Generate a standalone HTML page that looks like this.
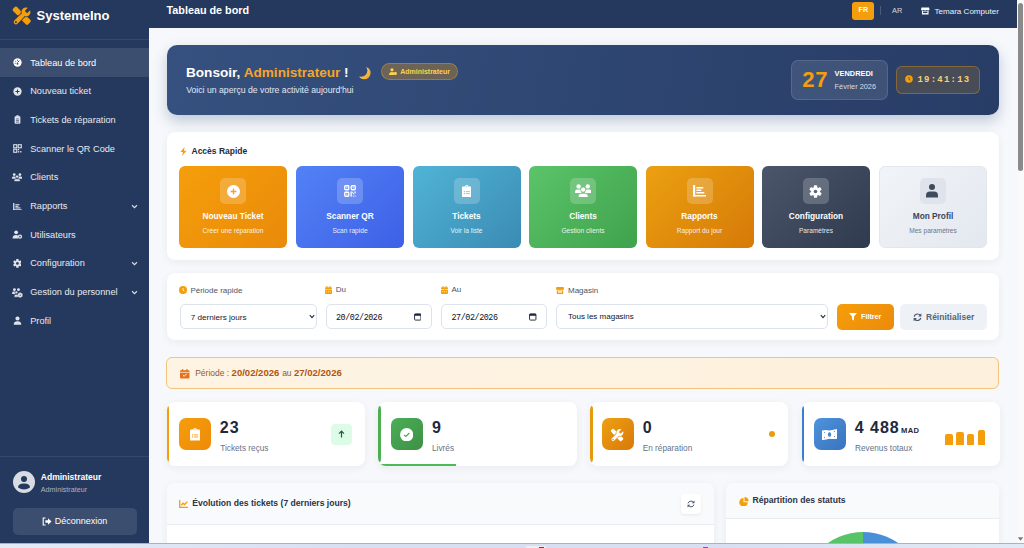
<!DOCTYPE html>
<html><head><meta charset="utf-8">
<style>
*{box-sizing:border-box;margin:0;padding:0}
html,body{width:1024px;height:548px;overflow:hidden;background:#f6f8fb;font-family:"Liberation Sans",sans-serif}
.abs{position:absolute}
.t{position:absolute;white-space:nowrap;line-height:1}
#side{position:absolute;left:0;top:0;width:149px;height:543px;background:#25395e}
#top{position:absolute;left:149px;top:0;width:868px;height:28px;background:#25395e}
#main{position:absolute;left:149px;top:28px;width:868px;height:515px;background:#f6f8fb}
.card{position:absolute;background:#fff;border-radius:8px;box-shadow:0 2px 8px rgba(30,41,59,0.06)}
.nav{position:absolute;left:0;width:149px;height:29px}
.nav .ic{position:absolute;left:13px;top:10px;width:9px;height:9px}
.nav .lb{position:absolute;left:30.2px;top:10.5px;font-size:9.2px;color:#e6e9f0;line-height:1;white-space:nowrap}
.chev{position:absolute;left:131px;top:11px;width:7px;height:7px}
.tile{position:absolute;top:166px;width:108px;height:81.5px;border-radius:6px}
.tile .ib{position:absolute;left:41px;top:11.5px;width:26px;height:26px;border-radius:5px;background:rgba(255,255,255,0.2)}
.tile .tt{position:absolute;left:0;width:108px;text-align:center;top:46px;font-size:8.3px;font-weight:700;color:#fff;line-height:1}
.tile .ts{position:absolute;left:0;width:108px;text-align:center;top:62px;font-size:6.6px;color:rgba(255,255,255,0.9);line-height:1}
.lbl{position:absolute;top:286.6px;font-size:8px;color:#4a5568;line-height:1;white-space:nowrap}
.inp{position:absolute;top:304.2px;height:25.2px;border:1px solid #dde3ec;border-radius:5px;background:#fff}
.stat{position:absolute;top:402px;width:198px;height:64px;background:#fff;border-radius:8px;box-shadow:0 2px 8px rgba(30,41,59,0.06);overflow:hidden}
.stat .bar{position:absolute;left:0;top:4px;width:2.6px;height:56px;border-radius:2.6px/7px}
.stat .sib{position:absolute;left:12.4px;top:16px;width:32px;height:32px;border-radius:7px}
.stat .num{position:absolute;left:53.3px;top:18px;font-size:16px;letter-spacing:1px;font-weight:700;color:#1e293b;line-height:1;white-space:nowrap}
.stat .sl{position:absolute;left:53.7px;top:43.1px;font-size:8.25px;color:#64748b;line-height:1;white-space:nowrap}
</style></head><body>

<!-- SIDEBAR -->
<div id="side">
  <svg class="abs" style="left:10px;top:4px" width="24" height="24" viewBox="0 0 24 24">
    <g transform="rotate(45 12 12)" fill="#f59e0b">
      <rect x="0.6" y="9.2" width="8.6" height="5.6" rx="1.6"/>
      <rect x="8" y="11" width="5" height="2"/>
      <rect x="11.6" y="8.9" width="10.6" height="6.2" rx="1.4"/>
    </g>
    <g transform="rotate(-45 12 12)">
      <g fill="#25395e" stroke="#25395e" stroke-width="1.6"><rect x="1.2" y="9.8" width="13" height="4.4" rx="2.2"/><circle cx="17.6" cy="12" r="4.5"/></g>
      <g fill="#f59e0b"><rect x="1.2" y="9.8" width="13" height="4.4" rx="2.2"/><circle cx="17.6" cy="12" r="4.5"/></g>
      <path d="M17.9 10.3 H23 V13.7 H17.9 Q16.8 12 17.9 10.3Z" fill="#25395e"/>
      <circle cx="3.4" cy="12" r="1" fill="#25395e"/>
    </g>
  </svg>
  <div class="t" style="left:36.5px;top:9px;font-size:13px;font-weight:700;color:#fff">SystemeIno</div>
  <div class="abs" style="left:0;top:39px;width:149px;height:1px;background:#34486c"></div>

  <div class="nav" style="top:48.0px;background:#3c4e6f">
    <svg class="ic" viewBox="0 0 10 10"><circle cx="5" cy="5" r="4.6" fill="#fff"/><path d="M5 5 L7 3" stroke="#3c4e6f" stroke-width="1.1"/><circle cx="3" cy="3.6" r="0.6" fill="#3c4e6f"/><circle cx="5" cy="2.4" r="0.6" fill="#3c4e6f"/><circle cx="2.4" cy="5.8" r="0.6" fill="#3c4e6f"/><circle cx="5" cy="6.4" r="1" fill="#3c4e6f"/></svg>
    <div class="lb" style="color:#fff">Tableau de bord</div>
  </div>
  <div class="nav" style="top:76.7px">
    <svg class="ic" viewBox="0 0 10 10"><circle cx="5" cy="5" r="4.6" fill="#dfe3ea"/><path d="M5 2.8V7.2M2.8 5H7.2" stroke="#25395e" stroke-width="1.1"/></svg>
    <div class="lb">Nouveau ticket</div>
  </div>
  <div class="nav" style="top:105.4px">
    <svg class="ic" viewBox="0 0 10 10"><rect x="1.8" y="1.4" width="6.4" height="8.2" rx="0.8" fill="#dfe3ea"/><rect x="3.6" y="0.4" width="2.8" height="1.8" rx="0.5" fill="#dfe3ea"/><path d="M3.3 4.4H6.7M3.3 6.2H6.7M3.3 8H6.7" stroke="#25395e" stroke-width="0.7"/></svg>
    <div class="lb">Tickets de réparation</div>
  </div>
  <div class="nav" style="top:134.1px">
    <svg class="ic" viewBox="0 0 10 10"><g fill="none" stroke="#dfe3ea" stroke-width="1.2"><rect x="0.8" y="0.8" width="3.4" height="3.4"/><rect x="5.8" y="0.8" width="3.4" height="3.4"/><rect x="0.8" y="5.8" width="3.4" height="3.4"/></g><rect x="5.4" y="5.4" width="1.5" height="1.5" fill="#dfe3ea"/><rect x="7.9" y="7.9" width="1.5" height="1.5" fill="#dfe3ea"/><rect x="5.4" y="7.9" width="1.5" height="1.5" fill="#dfe3ea"/></svg>
    <div class="lb">Scanner le QR Code</div>
  </div>
  <div class="nav" style="top:162.8px">
    <svg class="abs" style="left:11.7px;top:10.2px" width="10.2" height="8.6" viewBox="0 0 16.4 13.6"><g fill="#dfe3ea"><circle cx="3.6" cy="2.4" r="2.2"/><circle cx="12.8" cy="2.4" r="2.2"/><path d="M0 9V7.6Q0 5.6 2.4 5.6H4.8Q6.6 5.6 6.6 7.4V9Z"/><path d="M16.4 9V7.6Q16.4 5.6 14 5.6H11.6Q9.8 5.6 9.8 7.4V9Z"/></g><g fill="#dfe3ea" stroke="#25395e" stroke-width="1.1"><circle cx="8.2" cy="5.6" r="2.6"/><path d="M3.2 13.6V12.2Q3.2 9.3 6 9.3H10.4Q13.2 9.3 13.2 12.2V13.6Z"/></g></svg>
    <div class="lb">Clients</div>
  </div>
  <div class="nav" style="top:191.5px">
    <svg class="abs" style="left:13px;top:11px" width="8.8" height="7.4" viewBox="0 0 13.4 11.6"><g fill="#dfe3ea"><rect x="0" y="0" width="2" height="11.6"/><rect x="0" y="9.8" width="13.4" height="1.8"/><rect x="3.5" y="1.9" width="6.5" height="1.7"/><rect x="3.5" y="4.4" width="4.8" height="1.7"/><rect x="3.5" y="6.9" width="8" height="1.7"/></g></svg>
    <div class="lb">Rapports</div>
    <svg class="chev" viewBox="0 0 8 8"><path d="M1.2 2.6L4 5.4L6.8 2.6" fill="none" stroke="#d5dae3" stroke-width="1.45"/></svg>
  </div>
  <div class="nav" style="top:220.2px">
    <svg class="ic" style="width:11px;left:12px" viewBox="0 0 11 10"><g fill="#dfe3ea"><circle cx="4" cy="2.6" r="2.1"/><path d="M0 9.4 Q0 5.6 4 5.6 Q5.5 5.6 6 6 L6 9.4Z"/><circle cx="8.2" cy="7.4" r="2.4"/></g><circle cx="8.2" cy="7.4" r="0.9" fill="#25395e"/></svg>
    <div class="lb">Utilisateurs</div>
  </div>
  <div class="nav" style="top:248.9px">
    <svg class="abs" style="left:12.6px;top:10.2px" width="8.8" height="8.8" viewBox="0 0 13 13"><g fill="#dfe3ea"><circle cx="6.5" cy="6.5" r="4.4"/><g transform="translate(6.5 6.5)"><rect x="-1.8" y="-6.4" width="3.6" height="12.8" rx="0.8"/><rect x="-1.8" y="-6.4" width="3.6" height="12.8" rx="0.8" transform="rotate(60)"/><rect x="-1.8" y="-6.4" width="3.6" height="12.8" rx="0.8" transform="rotate(120)"/></g></g><circle cx="6.5" cy="6.5" r="1.9" fill="#25395e"/></svg>
    <div class="lb">Configuration</div>
    <svg class="chev" viewBox="0 0 8 8"><path d="M1.2 2.6L4 5.4L6.8 2.6" fill="none" stroke="#d5dae3" stroke-width="1.45"/></svg>
  </div>
  <div class="nav" style="top:277.6px">
    <svg class="abs" style="left:11.8px;top:10.4px" width="10.8" height="9.6" viewBox="0 0 11 10"><g fill="#dfe3ea"><circle cx="2.4" cy="1.7" r="1.5"/><circle cx="6.6" cy="1.7" r="1.5"/><path d="M0 6.2V5.2Q0 3.7 1.6 3.7H3.4Q4.6 3.7 4.6 5V6.2Z"/><circle cx="4.5" cy="4.6" r="1.5" stroke="#25395e" stroke-width="0.7"/><path d="M2 9.6V8.4Q2 6.6 3.8 6.6H5.6Q6.8 6.6 6.8 8V9.6Z" stroke="#25395e" stroke-width="0.7"/></g><g fill="#dfe3ea" transform="translate(8.4 7.4)" stroke="#25395e" stroke-width="0.5"><circle r="2.4"/></g><g fill="#dfe3ea" transform="translate(8.4 7.4)"><rect x="-0.7" y="-2.6" width="1.4" height="5.2"/><rect x="-0.7" y="-2.6" width="1.4" height="5.2" transform="rotate(60)"/><rect x="-0.7" y="-2.6" width="1.4" height="5.2" transform="rotate(120)"/><circle r="1.8"/></g><circle cx="8.4" cy="7.4" r="0.7" fill="#25395e"/></svg>
    <div class="lb">Gestion du personnel</div>
    <svg class="chev" viewBox="0 0 8 8"><path d="M1.2 2.6L4 5.4L6.8 2.6" fill="none" stroke="#d5dae3" stroke-width="1.45"/></svg>
  </div>
  <div class="nav" style="top:306.3px">
    <svg class="ic" viewBox="0 0 10 10"><g fill="#dfe3ea"><circle cx="5" cy="2.8" r="2.3"/><path d="M0.8 9.6 Q0.8 5.8 5 5.8 Q9.2 5.8 9.2 9.6Z"/></g></svg>
    <div class="lb">Profil</div>
  </div>

  <div class="abs" style="left:0;top:456px;width:149px;height:1px;background:#34486c"></div>
  <svg class="abs" style="left:12.5px;top:471px" width="22" height="22" viewBox="0 0 22 22"><circle cx="11" cy="11" r="11" fill="#d8dbe2"/><circle cx="11" cy="8" r="3" fill="#25395e"/><path d="M5 16.5 Q5 12.5 11 12.5 Q17 12.5 17 16.5 Q14 18.5 11 18.5 Q8 18.5 5 16.5Z" fill="#25395e"/></svg>
  <div class="t" style="left:40.8px;top:473px;font-size:8.5px;font-weight:700;color:#fff">Administrateur</div>
  <div class="t" style="left:40.8px;top:486px;font-size:7.2px;color:#a9b3c6">Administrateur</div>
  <div class="abs" style="left:13px;top:508px;width:123.5px;height:26.5px;border-radius:5px;background:#3c4e6f"></div>
  <svg class="abs" style="left:41.5px;top:516.5px" width="10" height="9" viewBox="0 0 10 9"><path d="M3.6 1H1.2V8H3.6" fill="none" stroke="#fff" stroke-width="1.1"/><path d="M3.4 3.3H6V1.3L9.5 4.5L6 7.7V5.7H3.4Z" fill="#fff"/></svg>
  <div class="t" style="left:54.8px;top:517px;font-size:9px;color:#fff">Déconnexion</div>
</div>

<!-- TOP BAR -->
<div id="top">
  <div class="t" style="left:17.5px;top:5.4px;font-size:10.8px;font-weight:700;color:#fff">Tableau de bord</div>
  <div class="abs" style="left:703px;top:2px;width:22px;height:17.5px;border-radius:3px;background:#f59e0b"></div>
  <div class="t" style="left:709.6px;top:7.3px;font-size:7.1px;font-weight:700;color:#fff">FR</div>
  <div class="abs" style="left:730.5px;top:5.5px;width:1px;height:9px;background:#4a5b7a"></div>
  <div class="t" style="left:743px;top:7.3px;font-size:7.4px;color:#d4d9e3">AR</div>
  <svg class="abs" style="left:772px;top:6.5px" width="8.5" height="8" viewBox="0 0 9 8"><path d="M0.5 0.3H8.5L9 2.6Q8.6 3.4 7.6 3.4Q6.6 3.4 6.3 2.7Q5.8 3.4 4.5 3.4Q3.2 3.4 2.7 2.7Q2.4 3.4 1.4 3.4Q0.4 3.4 0 2.6Z" fill="#fff"/><path d="M1 3.9H8V7.7H1Z" fill="#fff"/><rect x="2.2" y="4.6" width="4.6" height="1.6" fill="#25395e"/></svg>
  <div class="t" style="left:785.5px;top:7.6px;font-size:8.05px;color:#eef1f6">Temara Computer</div>
</div>

<!-- scrollbar -->
<div class="abs" style="left:1017px;top:0;width:7px;height:543px;background:#fafafa"></div>
<div class="abs" style="left:1018px;top:3px;width:4.5px;height:168px;border-radius:3px;background:#8a8a8a"></div>
<svg class="abs" style="left:1017px;top:535.5px" width="7" height="6" viewBox="0 0 7 6"><path d="M0.8 1.2H6.2L3.5 4.8Z" fill="#7a7a7a"/></svg>

<!-- HERO -->
<div class="abs" style="left:166.5px;top:45px;width:832.5px;height:70px;border-radius:10px;background:linear-gradient(100deg,#36517f 0%,#2e4672 50%,#283d66 100%);box-shadow:0 6px 14px rgba(30,58,110,0.25)"></div>
<div class="t" style="left:186px;top:65.5px;font-size:13.6px;font-weight:700;color:#fff">Bonsoir, <span style="color:#f6a623">Administrateur</span> !</div>
<svg class="abs" style="left:356.5px;top:66px" width="14" height="14" viewBox="0 0 14 14"><defs><mask id="mm"><rect width="14" height="14" fill="#fff"/><circle cx="4.2" cy="4.6" r="6.2" fill="#000"/></mask><linearGradient id="mg" x1="0" y1="0" x2="1" y2="1"><stop offset="0" stop-color="#ffd36b"/><stop offset="1" stop-color="#f0a52a"/></linearGradient></defs><circle cx="7.3" cy="7" r="6.3" fill="url(#mg)" mask="url(#mm)"/></svg>
<div class="abs" style="left:381px;top:63px;width:77px;height:17px;border-radius:9px;background:rgba(245,158,11,0.3);border:1px solid rgba(245,158,11,0.4)"></div>
<svg class="abs" style="left:389px;top:68px" width="8" height="7" viewBox="0 0 8 7"><circle cx="3" cy="1.8" r="1.6" fill="#fcd34d"/><path d="M0 7Q0 4 3 4Q4.5 4 5 4.5V7Z" fill="#fcd34d"/><circle cx="6.3" cy="5.4" r="1.6" fill="#fcd34d"/></svg>
<div class="t" style="left:400.2px;top:68px;font-size:7px;font-weight:700;color:#fcd34d">Administrateur</div>
<div class="t" style="left:186.2px;top:86px;font-size:8.7px;color:#e3e8f2">Voici un aperçu de votre activité aujourd'hui</div>

<div class="abs" style="left:791px;top:60px;width:97px;height:40px;border-radius:7px;background:rgba(255,255,255,0.1);border:1px solid rgba(255,255,255,0.12)"></div>
<div class="t" style="left:802.3px;top:69px;font-size:22px;font-weight:700;color:#f59e0b;letter-spacing:0.6px">27</div>
<div class="t" style="left:834.6px;top:70px;font-size:7.4px;font-weight:700;color:#fff">VENDREDI</div>
<div class="t" style="left:834.6px;top:82.6px;font-size:7.4px;color:#d7dce6">Février 2026</div>
<div class="abs" style="left:896px;top:66px;width:84px;height:28px;border-radius:6px;background:#484c56;border:1px solid rgba(245,158,11,0.35)"></div>
<svg class="abs" style="left:905px;top:75px" width="8" height="8" viewBox="0 0 8 8"><circle cx="4" cy="4" r="3.8" fill="#f59e0b"/><path d="M4 2V4.3L5.4 5.2" fill="none" stroke="#4a4540" stroke-width="0.8"/></svg>
<div class="t" style="left:917.5px;top:75.5px;font-size:9px;font-weight:700;color:#f3d27a;font-family:'Liberation Mono';letter-spacing:1.22px">19:41:13</div>

<!-- QUICK ACCESS -->
<div class="card" style="left:167px;top:132px;width:832px;height:128px"></div>
<svg class="abs" style="left:179.5px;top:146.5px" width="7" height="9" viewBox="0 0 7 9"><path d="M4.5 0L0.5 5H3L2 9L6.5 3.8H4Z" fill="#f59e0b"/></svg>
<div class="t" style="left:191.5px;top:147px;font-size:8.5px;font-weight:700;color:#1e293b">Accès Rapide</div>

<div class="tile" style="left:179px;background:linear-gradient(135deg,#f59e0b,#ea8a0a)">
  <div class="ib"></div>
  <svg class="abs" style="left:47.5px;top:18.8px" width="13" height="13" viewBox="0 0 13 13"><circle cx="6.5" cy="6.5" r="6.5" fill="#fff"/><path d="M6.5 3.6V9.4M3.6 6.5H9.4" stroke="#f3a12c" stroke-width="1.3"/></svg>
  <div class="tt">Nouveau Ticket</div><div class="ts">Créer une réparation</div>
</div>
<div class="tile" style="left:296px;background:linear-gradient(135deg,#5282f6,#3e60e6)">
  <div class="ib"></div>
  <svg class="abs" style="left:48px;top:18.5px" width="12" height="12" viewBox="0 0 12 12"><g fill="none" stroke="#fff" stroke-width="1.3"><rect x="0.75" y="0.75" width="4" height="4" rx="0.7"/><rect x="7.25" y="0.75" width="4" height="4" rx="0.7"/><rect x="0.75" y="7.25" width="4" height="4" rx="0.7"/></g><g fill="#fff"><rect x="2.2" y="2.2" width="1.1" height="1.1"/><rect x="8.7" y="2.2" width="1.1" height="1.1"/><rect x="2.2" y="8.7" width="1.1" height="1.1"/><rect x="6.5" y="6.5" width="1.3" height="5.2"/><rect x="10.4" y="6.5" width="1.3" height="1.8"/><path d="M7.6 6.8L8.6 6.8L10.6 9.4L9.6 9.4Z"/><rect x="8.7" y="10.6" width="1" height="1"/><rect x="10.6" y="10.6" width="1" height="1"/></g></svg>
  <div class="tt">Scanner QR</div><div class="ts">Scan rapide</div>
</div>
<div class="tile" style="left:412.5px;background:linear-gradient(135deg,#50b4d6,#3b8bb3)">
  <div class="ib"></div>
  <svg class="abs" style="left:49.2px;top:18.8px" width="9.6" height="12.2" viewBox="0 0 9.6 12.2"><g fill="#fff"><rect x="0" y="1.4" width="9.6" height="10.8" rx="0.9"/><circle cx="4.8" cy="1.7" r="1.7"/></g><g fill="#84c4dc"><circle cx="4.8" cy="1.8" r="0.6"/><rect x="1.8" y="6.1" width="1.2" height="1.1"/><rect x="1.8" y="8.1" width="1.2" height="1.1"/><rect x="3.9" y="6.2" width="3.9" height="0.9"/><rect x="3.9" y="8.2" width="3.9" height="0.9"/></g></svg>
  <div class="tt">Tickets</div><div class="ts">Voir la liste</div>
</div>
<div class="tile" style="left:529px;background:linear-gradient(135deg,#5bc46a,#3fa24c)">
  <div class="ib"></div>
  <svg class="abs" style="left:45.8px;top:17.8px" width="16.4" height="13.6" viewBox="0 0 16.4 13.6"><g fill="#fff"><circle cx="3.6" cy="2.4" r="2.2"/><circle cx="12.8" cy="2.4" r="2.2"/><path d="M0 9V7.6Q0 5.6 2.4 5.6H4.8Q6.6 5.6 6.6 7.4V9Z"/><path d="M16.4 9V7.6Q16.4 5.6 14 5.6H11.6Q9.8 5.6 9.8 7.4V9Z"/></g><g fill="#fff" stroke="#78c580" stroke-width="0.9"><circle cx="8.2" cy="5.6" r="2.6"/><path d="M3.2 13.6V12.2Q3.2 9.3 6 9.3H10.4Q13.2 9.3 13.2 12.2V13.6Z"/></g></svg>
  <div class="tt">Clients</div><div class="ts">Gestion clients</div>
</div>
<div class="tile" style="left:645.5px;background:linear-gradient(135deg,#eba010,#d67a08)">
  <div class="ib"></div>
  <svg class="abs" style="left:47.4px;top:19px" width="13.4" height="11.6" viewBox="0 0 13.4 11.6"><g fill="#fff"><rect x="0" y="0" width="2.2" height="11.6" rx="0.6"/><rect x="0" y="9.9" width="13.4" height="1.7" rx="0.6"/><rect x="3.3" y="1.9" width="7" height="1.7" rx="0.4"/><rect x="3.3" y="4.4" width="5.2" height="1.5" rx="0.4"/><rect x="3.3" y="6.9" width="8" height="1.7" rx="0.4"/></g></svg>
  <div class="tt">Rapports</div><div class="ts">Rapport du jour</div>
</div>
<div class="tile" style="left:762px;background:linear-gradient(135deg,#4b566b,#2f3a4e)">
  <div class="ib"></div>
  <svg class="abs" style="left:47.4px;top:18.8px" width="13" height="13" viewBox="0 0 13 13"><g fill="#fff"><circle cx="6.5" cy="6.5" r="4.4"/><g transform="translate(6.5 6.5)"><rect x="-1.7" y="-6.3" width="3.4" height="12.6" rx="0.8"/><rect x="-1.7" y="-6.3" width="3.4" height="12.6" rx="0.8" transform="rotate(60)"/><rect x="-1.7" y="-6.3" width="3.4" height="12.6" rx="0.8" transform="rotate(120)"/></g></g><circle cx="6.5" cy="6.5" r="1.8" fill="#5d6779"/></svg>
  <div class="tt">Configuration</div><div class="ts">Paramètres</div>
</div>
<div class="tile" style="left:879px;background:linear-gradient(135deg,#f1f4f8,#e3e8ef);border:1px solid #e2e7ee">
  <div class="ib" style="background:#dfe4ec;left:40px;top:10.5px"></div>
  <svg class="abs" style="left:46.4px;top:17.4px" width="12" height="13.4" viewBox="0 0 12 13.4"><g fill="#3f4a5c"><circle cx="6" cy="3" r="3"/><path d="M0 13.4V11.6Q0 7.6 4 7.6H8Q12 7.6 12 11.6V13.4Z"/></g></svg>
  <div class="tt" style="color:#3b4556;top:45px;left:-1px">Mon Profil</div><div class="ts" style="color:#6b7688;top:61px;left:-1px">Mes paramètres</div>
</div>

<!-- FILTERS -->
<div class="card" style="left:167px;top:273px;width:832px;height:67px"></div>
<svg class="abs" style="left:179px;top:286.3px" width="8" height="8" viewBox="0 0 8 8"><circle cx="4" cy="4" r="4" fill="#f59e0b"/><path d="M4 2V4.2L5.3 5" fill="none" stroke="#fff" stroke-width="0.8"/></svg>
<div class="lbl" style="left:190.4px">Période rapide</div>
<div class="inp" style="left:179.5px;width:137.5px"></div>
<div class="t" style="left:190.7px;top:313.6px;font-size:8.1px;color:#0f172a">7 derniers jours</div>
<svg class="abs" style="left:309px;top:314px" width="6" height="5" viewBox="0 0 6 5"><path d="M0.8 1.2L3 3.6L5.2 1.2" fill="none" stroke="#1e293b" stroke-width="1.1"/></svg>

<svg class="abs" style="left:325px;top:286px" width="7" height="8" viewBox="0 0 7 8"><g fill="#f59e0b"><rect x="1.5" y="0" width="1" height="1.8" rx="0.4"/><rect x="4.5" y="0" width="1" height="1.8" rx="0.4"/><rect x="0" y="1.2" width="7" height="1.7" rx="0.6"/><rect x="0" y="3.4" width="7" height="4.6" rx="0.8"/></g><g fill="#fde6bf"><rect x="1.3" y="5" width="0.8" height="1.2"/><rect x="3.1" y="5" width="0.8" height="1.2"/><rect x="4.9" y="5" width="0.8" height="1.2"/></g></svg>
<div class="lbl" style="left:335.8px;top:286.4px">Du</div>
<div class="inp" style="left:325.8px;width:106px"></div>
<div class="t" style="left:336px;top:314px;font-size:8.4px;letter-spacing:-0.42px;color:#0b0f19;font-family:'Liberation Mono'">20/02/2026</div>
<svg class="abs" style="left:413.8px;top:313.2px" width="7.5" height="7.8" viewBox="0 0 8 8"><rect x="0.6" y="0.8" width="6.8" height="6.6" rx="0.8" fill="none" stroke="#1e293b" stroke-width="1"/><rect x="0.6" y="0.8" width="6.8" height="2" fill="#1e293b"/></svg>

<svg class="abs" style="left:441px;top:286px" width="7" height="8" viewBox="0 0 7 8"><g fill="#f59e0b"><rect x="1.5" y="0" width="1" height="1.8" rx="0.4"/><rect x="4.5" y="0" width="1" height="1.8" rx="0.4"/><rect x="0" y="1.2" width="7" height="1.7" rx="0.6"/><rect x="0" y="3.4" width="7" height="4.6" rx="0.8"/></g><g fill="#fde6bf"><rect x="1.3" y="5" width="0.8" height="1.2"/><rect x="3.1" y="5" width="0.8" height="1.2"/><rect x="4.9" y="5" width="0.8" height="1.2"/></g></svg>
<div class="lbl" style="left:451.5px;top:286.4px">Au</div>
<div class="inp" style="left:441px;width:106px"></div>
<div class="t" style="left:451.5px;top:314px;font-size:8.4px;letter-spacing:-0.42px;color:#0b0f19;font-family:'Liberation Mono'">27/02/2026</div>
<svg class="abs" style="left:529.3px;top:313.2px" width="7.5" height="7.8" viewBox="0 0 8 8"><rect x="0.6" y="0.8" width="6.8" height="6.6" rx="0.8" fill="none" stroke="#1e293b" stroke-width="1"/><rect x="0.6" y="0.8" width="6.8" height="2" fill="#1e293b"/></svg>

<svg class="abs" style="left:556.2px;top:286.5px" width="8" height="7.5" viewBox="0 0 8 7.5"><path d="M0.4 0H7.6L8 2.2Q7.7 3 6.8 3Q5.9 3 5.6 2.4Q5.2 3 4 3Q2.8 3 2.4 2.4Q2.1 3 1.2 3Q0.3 3 0 2.2Z" fill="#f59e0b"/><path d="M0.8 3.5H7.2V7.5H0.8Z" fill="#f59e0b"/><rect x="2" y="4.2" width="4" height="1.4" fill="#fff"/></svg>
<div class="lbl" style="left:568px;top:287px">Magasin</div>
<div class="inp" style="left:556.2px;width:271.5px"></div>
<div class="t" style="left:568px;top:313.4px;font-size:8px;color:#0f172a">Tous les magasins</div>
<svg class="abs" style="left:820px;top:314px" width="6" height="5" viewBox="0 0 6 5"><path d="M0.8 1.2L3 3.6L5.2 1.2" fill="none" stroke="#1e293b" stroke-width="1.1"/></svg>

<div class="abs" style="left:837px;top:304px;width:57px;height:26px;border-radius:5px;background:linear-gradient(135deg,#f59e0b,#ec8a0a)"></div>
<svg class="abs" style="left:849px;top:313px" width="8" height="8" viewBox="0 0 8 8"><path d="M0 0H8L5 3.6V7.6L3 6.4V3.6Z" fill="#fff"/></svg>
<div class="t" style="left:861px;top:312.7px;font-size:7.2px;font-weight:700;color:#fff">Filtrer</div>
<div class="abs" style="left:900px;top:304px;width:87px;height:26px;border-radius:5px;background:#eef2f7"></div>
<svg class="abs" style="left:913px;top:312.5px" width="9" height="8.5" viewBox="0 0 9 8.5"><g fill="none" stroke="#4a5568" stroke-width="1.2"><path d="M1.2 3.6Q1.8 1 4.5 1Q6.6 1 7.6 2.6"/><path d="M7.8 4.9Q7.2 7.5 4.5 7.5Q2.4 7.5 1.4 5.9"/></g><path d="M8.4 0.2V3.4H5.2Z" fill="#4a5568"/><path d="M0.6 8.3V5.1H3.8Z" fill="#4a5568"/></svg>
<div class="t" style="left:926px;top:312.6px;font-size:8.5px;font-weight:700;color:#586478">Réinitialiser</div>

<!-- PERIOD BANNER -->
<div class="abs" style="left:166px;top:357.3px;width:833px;height:31.5px;border-radius:6px;background:linear-gradient(90deg,#fef4e4,#fdf0dc);border:1px solid #f5c37d"></div>
<svg class="abs" style="left:180px;top:369px" width="9.5" height="9.5" viewBox="0 0 9 9"><g fill="#e8711a"><rect x="0" y="1.3" width="9" height="7.7" rx="1"/><rect x="1.8" y="0" width="1.2" height="2.2"/><rect x="6" y="0" width="1.2" height="2.2"/></g><path d="M0 3.2H9" stroke="#fef4e4" stroke-width="0.7"/><path d="M2.8 5.8L4 6.9L6.3 4.6" fill="none" stroke="#fff" stroke-width="0.9"/></svg>
<div class="t" style="left:195.2px;top:368.3px;font-size:8.5px;color:#8f5a30">Période : <b style="color:#b4530a;font-size:9.55px">20/02/2026</b> <span style="margin-left:0.4px">au</span> <b style="color:#b4530a;font-size:9.55px">27/02/2026</b></div>

<!-- STATS -->
<div class="stat" style="left:166.5px">
  <div class="bar" style="background:#f59e0b"></div>
  <div class="sib" style="background:linear-gradient(135deg,#f59e0b,#ee8a08)"></div>
  <svg class="abs" style="left:23.6px;top:26.4px" width="10" height="12.6" viewBox="0 0 9.6 12.2"><g fill="#fff"><rect x="0" y="1.4" width="9.6" height="10.8" rx="0.9"/><circle cx="4.8" cy="1.7" r="1.7"/></g><g fill="#f3a130"><circle cx="4.8" cy="1.8" r="0.6"/><rect x="1.8" y="6.1" width="1.2" height="1.1"/><rect x="1.8" y="8.1" width="1.2" height="1.1"/><rect x="3.9" y="6.2" width="3.9" height="0.9"/><rect x="3.9" y="8.2" width="3.9" height="0.9"/></g></svg>
  <div class="num">23</div>
  <div class="sl">Tickets reçus</div>
  <div class="abs" style="left:164.5px;top:21.5px;width:21px;height:21px;border-radius:4px;background:#dcfce7"></div>
  <svg class="abs" style="left:171.5px;top:28px" width="7" height="8" viewBox="0 0 7 8"><path d="M3.5 7.5V1.2M1 3.6L3.5 1L6 3.6" fill="none" stroke="#1d5c3a" stroke-width="1.2"/></svg>
</div>
<div class="stat" style="left:378px;width:198.5px">
  <div class="bar" style="background:#4caf50"></div>
  <div class="abs" style="left:0;top:62px;width:78px;height:2px;background:#4cbb55"></div>
  <div class="sib" style="left:12.8px;background:linear-gradient(135deg,#4caf57,#3d8f45)"></div>
  <svg class="abs" style="left:21.8px;top:25.8px" width="13.4" height="13.4" viewBox="0 0 12 12"><circle cx="6" cy="6" r="6" fill="#fff"/><path d="M3.6 6.1L5.2 7.6L8.4 4.5" fill="none" stroke="#48a350" stroke-width="1"/></svg>
  <div class="num" style="left:54px">9</div>
  <div class="sl" style="left:54px">Livrés</div>
</div>
<div class="stat" style="left:590px">
  <div class="bar" style="background:#e39a0c"></div>
  <div class="sib" style="left:12.1px;background:linear-gradient(135deg,#eea012,#d9780a)"></div>
  <svg class="abs" style="left:18.6px;top:24.6px" width="16.5" height="16.5" viewBox="0 0 24 24">
    <g transform="rotate(45 12 12)" fill="#fff">
      <rect x="0.6" y="9.2" width="8.6" height="5.6" rx="1.6"/>
      <rect x="8" y="11" width="5" height="2"/>
      <rect x="11.6" y="8.9" width="10.6" height="6.2" rx="1.4"/>
    </g>
    <g transform="rotate(-45 12 12)">
      <g fill="#e8900d" stroke="#e8900d" stroke-width="1.6"><rect x="1.2" y="9.7" width="13" height="4.6" rx="2.3"/><circle cx="17.3" cy="12" r="4.9"/></g>
      <g fill="#fff"><rect x="1.2" y="9.7" width="13" height="4.6" rx="2.3"/><circle cx="17.3" cy="12" r="4.9"/></g>
      <path d="M17.6 10.2 H23 V13.8 H17.6 Q16.4 12 17.6 10.2Z" fill="#e5890c"/>
      <circle cx="3.4" cy="12" r="1" fill="#e5890c"/>
    </g>
  </svg>
  <div class="num" style="left:52.7px">0</div>
  <div class="sl" style="left:52.7px">En réparation</div>
  <div class="abs" style="left:179px;top:29px;width:6px;height:6px;border-radius:3px;background:#eb9b0e"></div>
</div>
<div class="stat" style="left:801.5px">
  <div class="bar" style="background:#3b7dd0"></div>
  <div class="sib" style="left:12.5px;background:linear-gradient(135deg,#4d94dc,#3a72c0)"></div>
  <svg class="abs" style="left:20.5px;top:26.9px" width="15" height="11.2" viewBox="0 0 15 11.2"><path d="M0 1.4Q3.5 0.8 7.5 1.4Q11.5 0.6 15 0V9.8Q11.5 10.4 7.5 9.8Q3.5 10.6 0 11.2Z" fill="#fff"/><g fill="#4688d2"><ellipse cx="7.5" cy="5.6" rx="1.7" ry="2.3"/><circle cx="2.5" cy="3.5" r="0.6"/><circle cx="12.5" cy="2.5" r="0.6"/><circle cx="2.5" cy="8.6" r="0.6"/><circle cx="12.5" cy="7.6" r="0.6"/></g></svg>
  <div class="num" style="left:53.2px;font-size:16px">4 488<span style="font-size:7.6px;letter-spacing:0.4px;margin-left:1.2px">MAD</span></div>
  <div class="sl" style="left:53.5px">Revenus totaux</div>
  <div class="abs" style="left:143.5px;top:32px;width:7.6px;height:10.5px;border-radius:2px 2px 0 0;background:#f59e0b"></div>
  <div class="abs" style="left:154.5px;top:30px;width:7.6px;height:12.5px;border-radius:2px 2px 0 0;background:#f59e0b"></div>
  <div class="abs" style="left:165.3px;top:32px;width:7.6px;height:10.5px;border-radius:2px 2px 0 0;background:#f59e0b"></div>
  <div class="abs" style="left:176px;top:27.6px;width:7.6px;height:15.3px;border-radius:2px 2px 0 0;background:#f59e0b"></div>
</div>

<!-- CHART CARDS -->
<div class="abs" style="left:166.5px;top:483px;width:547px;height:80px;border-radius:8px;background:#fff;box-shadow:0 2px 8px rgba(30,41,59,0.06);overflow:hidden">
  <div class="abs" style="left:0;top:0;width:547px;height:41.5px;background:#f8fafc;border-bottom:1px solid #e8ecf1"></div>
</div>
<svg class="abs" style="left:179px;top:499.8px" width="9" height="8" viewBox="0 0 9 8"><path d="M0.7 0V7.3H9" fill="none" stroke="#f59e0b" stroke-width="1.3"/><path d="M2.2 5.2L4.1 3.2L5.6 4.5L8.4 1.6" fill="none" stroke="#f59e0b" stroke-width="1.3"/></svg>
<div class="t" style="left:192.2px;top:499.3px;font-size:8.6px;font-weight:700;color:#2a3446">Évolution des tickets (7 derniers jours)</div>
<div class="abs" style="left:681px;top:494px;width:19.5px;height:19.5px;border-radius:4px;background:#fff;box-shadow:0 1px 3px rgba(0,0,0,0.08)"></div>
<svg class="abs" style="left:686.5px;top:499.5px" width="8" height="8" viewBox="0 0 9 8.5"><g fill="none" stroke="#4a5568" stroke-width="1.1"><path d="M1.2 3.6Q1.8 1 4.5 1Q6.6 1 7.6 2.6"/><path d="M7.8 4.9Q7.2 7.5 4.5 7.5Q2.4 7.5 1.4 5.9"/></g><path d="M8.4 0.2V3.4H5.2Z" fill="#4a5568"/><path d="M0.6 8.3V5.1H3.8Z" fill="#4a5568"/></svg>

<div class="abs" style="left:726px;top:483px;width:273px;height:80px;border-radius:8px;background:#fff;box-shadow:0 2px 8px rgba(30,41,59,0.06);overflow:hidden">
  <div class="abs" style="left:0;top:0;width:273px;height:36px;background:#f8fafc;border-bottom:1px solid #e8ecf1"></div>
</div>
<svg class="abs" style="left:738.5px;top:496.5px" width="10" height="9.5" viewBox="0 0 10 10"><path d="M4.5 1A4.5 4.5 0 1 0 9 5.5H4.5Z" fill="#f59e0b"/><path d="M5.5 0A4.5 4.5 0 0 1 10 4.5H5.5Z" fill="#f59e0b"/></svg>
<div class="t" style="left:752.5px;top:496.4px;font-size:8.6px;font-weight:700;color:#2a3446">Répartition des statuts</div>
<svg class="abs" style="left:790px;top:530px" width="146" height="14" viewBox="790 530 146 14"><path d="M863 594 L863 532 A62 62 0 0 0 801 594Z" fill="#58c46a"/><path d="M863 594 L863 532 A62 62 0 0 1 925 594Z" fill="#4a90d9"/></svg>

<!-- taskbar strip -->
<div class="abs" style="left:0;top:543px;width:1024px;height:1px;background:#acb1bd"></div>
<div class="abs" style="left:0;top:544px;width:1024px;height:4px;background:linear-gradient(90deg,#e2ebf6 0%,#d9dff3 35%,#d9dff3 70%,#e0e9f5 100%)"></div>
<div class="abs" style="left:526px;top:546px;width:20px;height:2px;background:#eceef6"></div>
<div class="abs" style="left:538.5px;top:547px;width:5px;height:1px;background:#8a3a2a"></div>
<div class="abs" style="left:703px;top:547px;width:5px;height:1px;background:#a43cc0"></div>
</body></html>
